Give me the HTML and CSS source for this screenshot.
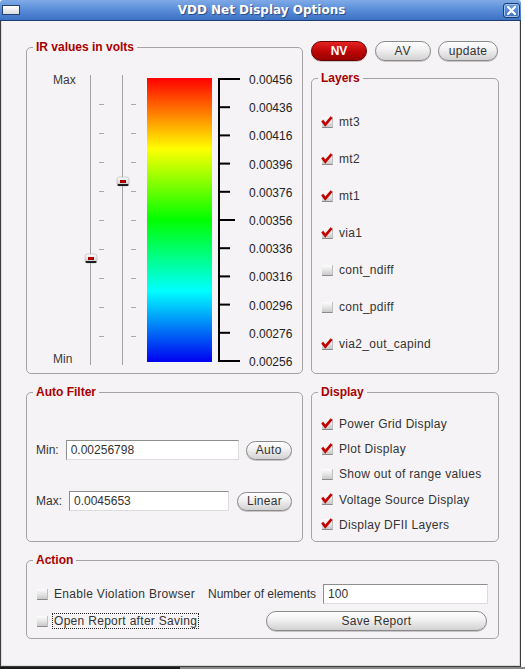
FILE: index.html
```html
<!DOCTYPE html>
<html>
<head>
<meta charset="utf-8">
<title>VDD Net Display Options</title>
<link rel="stylesheet" href="styles.css">
</head>
<body>
<div class="window">
  <div class="titlebar">
    <span class="win-icon"></span>
    <span class="win-title">VDD Net Display Options</span>
    <span class="win-close"><svg width="9" height="9" viewBox="0 0 9 9"><path d="M1 1L8 8M8 1L1 8" stroke="#fff" stroke-width="2.2" stroke-linecap="round"/></svg></span>
  </div>
  <div class="frame">
    <div class="grid">
      <div class="group ir">
        <div class="gtitle">IR values in volts</div>
        <div class="ir-body">
          <div class="mm"><span>Max</span><span>Min</span></div>
          <svg class="sliders" width="63" height="290" viewBox="0 0 63 290">
            <defs>
              <linearGradient id="hg" x1="0" y1="0" x2="0" y2="1">
                <stop offset="0" stop-color="#ffffff"/>
                <stop offset="1" stop-color="#c4c4c4"/>
              </linearGradient>
            </defs>
            <rect x="6" y="0" width="1" height="290" fill="#a2a2a2"/>
            <rect x="38" y="0" width="1" height="290" fill="#a2a2a2"/>
            <g fill="#a8a8a8">
              <rect x="15" y="29" width="5" height="1"/><rect x="47" y="29" width="5" height="1"/>
              <rect x="15" y="58" width="5" height="1"/><rect x="47" y="58" width="5" height="1"/>
              <rect x="15" y="87" width="5" height="1"/><rect x="47" y="87" width="5" height="1"/>
              <rect x="15" y="116" width="5" height="1"/><rect x="47" y="116" width="5" height="1"/>
              <rect x="15" y="145" width="5" height="1"/><rect x="47" y="145" width="5" height="1"/>
              <rect x="15" y="174" width="5" height="1"/><rect x="47" y="174" width="5" height="1"/>
              <rect x="15" y="203" width="5" height="1"/><rect x="47" y="203" width="5" height="1"/>
              <rect x="15" y="232" width="5" height="1"/><rect x="47" y="232" width="5" height="1"/>
              <rect x="15" y="261" width="5" height="1"/><rect x="47" y="261" width="5" height="1"/>
            </g>
            <g>
              <rect x="1" y="179" width="12" height="9" rx="2.5" fill="url(#hg)" stroke="#b4b4b4" stroke-width="0.6"/>
              <rect x="1.5" y="186" width="11" height="2" rx="1" fill="#1c1c1c"/>
              <rect x="4" y="182" width="6" height="3" fill="#a80000"/>
            </g>
            <g>
              <rect x="33" y="102" width="12" height="9" rx="2.5" fill="url(#hg)" stroke="#b4b4b4" stroke-width="0.6"/>
              <rect x="33.5" y="109" width="11" height="2" rx="1" fill="#1c1c1c"/>
              <rect x="36" y="105" width="6" height="3" fill="#a80000"/>
            </g>
          </svg>
          <div class="colorbar"></div>
          <svg class="scale" width="30" height="290" viewBox="0 0 30 290">
            <g fill="#000">
              <rect x="1" y="3" width="2" height="284"/>
              <rect x="1" y="3" width="22" height="2"/>
              <rect x="1" y="31.2" width="12" height="2"/>
              <rect x="1" y="59.4" width="12" height="2"/>
              <rect x="1" y="87.6" width="12" height="2"/>
              <rect x="1" y="115.8" width="12" height="2"/>
              <rect x="1" y="144" width="17" height="2"/>
              <rect x="1" y="172.2" width="12" height="2"/>
              <rect x="1" y="200.4" width="12" height="2"/>
              <rect x="1" y="228.6" width="12" height="2"/>
              <rect x="1" y="256.8" width="12" height="2"/>
              <rect x="1" y="285" width="22" height="2"/>
            </g>
          </svg>
          <div class="scale-labels">
            <span>0.00456</span><span>0.00436</span><span>0.00416</span><span>0.00396</span><span>0.00376</span><span>0.00356</span><span>0.00336</span><span>0.00316</span><span>0.00296</span><span>0.00276</span><span>0.00256</span>
          </div>
        </div>
      </div>

      <div class="rightcol">
        <div class="btnrow">
          <button class="btn btn-nv">NV</button>
          <button class="btn btn-av">AV</button>
          <button class="btn btn-upd">update</button>
        </div>
        <div class="group layers">
          <div class="gtitle">Layers</div>
          <div class="checklist layer-list">
            <div class="check"><span class="cb"><svg class="tick" width="12" height="11" viewBox="0 0 12 11"><path d="M1.2 4.6L4.3 8.6L10.6 1.2" fill="none" stroke="#c40000" stroke-width="2.6"/></svg></span><span class="ctext">mt3</span></div>
            <div class="check"><span class="cb"><svg class="tick" width="12" height="11" viewBox="0 0 12 11"><path d="M1.2 4.6L4.3 8.6L10.6 1.2" fill="none" stroke="#c40000" stroke-width="2.6"/></svg></span><span class="ctext">mt2</span></div>
            <div class="check"><span class="cb"><svg class="tick" width="12" height="11" viewBox="0 0 12 11"><path d="M1.2 4.6L4.3 8.6L10.6 1.2" fill="none" stroke="#c40000" stroke-width="2.6"/></svg></span><span class="ctext">mt1</span></div>
            <div class="check"><span class="cb"><svg class="tick" width="12" height="11" viewBox="0 0 12 11"><path d="M1.2 4.6L4.3 8.6L10.6 1.2" fill="none" stroke="#c40000" stroke-width="2.6"/></svg></span><span class="ctext">via1</span></div>
            <div class="check"><span class="cb"></span><span class="ctext">cont_ndiff</span></div>
            <div class="check"><span class="cb"></span><span class="ctext">cont_pdiff</span></div>
            <div class="check"><span class="cb"><svg class="tick" width="12" height="11" viewBox="0 0 12 11"><path d="M1.2 4.6L4.3 8.6L10.6 1.2" fill="none" stroke="#c40000" stroke-width="2.6"/></svg></span><span class="ctext">via2_out_capind</span></div>
          </div>
        </div>
      </div>

      <div class="group autofilter">
        <div class="gtitle">Auto Filter</div>
        <div class="filter-row first">
          <span class="field-label">Min:</span>
          <input class="input input-min" type="text" value="0.00256798">
          <button class="btn btn-auto">Auto</button>
        </div>
        <div class="filter-row second">
          <span class="field-label">Max:</span>
          <input class="input input-max" type="text" value="0.0045653">
          <button class="btn btn-linear">Linear</button>
        </div>
      </div>

      <div class="group display">
        <div class="gtitle">Display</div>
        <div class="checklist display-list">
          <div class="check"><span class="cb"><svg class="tick" width="12" height="11" viewBox="0 0 12 11"><path d="M1.2 4.6L4.3 8.6L10.6 1.2" fill="none" stroke="#c40000" stroke-width="2.6"/></svg></span><span class="ctext">Power Grid Display</span></div>
          <div class="check"><span class="cb"><svg class="tick" width="12" height="11" viewBox="0 0 12 11"><path d="M1.2 4.6L4.3 8.6L10.6 1.2" fill="none" stroke="#c40000" stroke-width="2.6"/></svg></span><span class="ctext">Plot Display</span></div>
          <div class="check"><span class="cb"></span><span class="ctext">Show out of range values</span></div>
          <div class="check"><span class="cb"><svg class="tick" width="12" height="11" viewBox="0 0 12 11"><path d="M1.2 4.6L4.3 8.6L10.6 1.2" fill="none" stroke="#c40000" stroke-width="2.6"/></svg></span><span class="ctext">Voltage Source Display</span></div>
          <div class="check"><span class="cb"><svg class="tick" width="12" height="11" viewBox="0 0 12 11"><path d="M1.2 4.6L4.3 8.6L10.6 1.2" fill="none" stroke="#c40000" stroke-width="2.6"/></svg></span><span class="ctext">Display DFII Layers</span></div>
        </div>
      </div>

      <div class="group action">
        <div class="gtitle">Action</div>
        <div class="action-row first">
          <div class="check cell-1"><span class="cb"></span><span class="ctext">Enable Violation Browser</span></div>
          <span class="field-label">Number of elements</span>
          <input class="input input-num" type="text" value="100">
        </div>
        <div class="action-row second">
          <div class="check cell-2"><span class="cb"></span><span class="ctext focus">Open Report after Saving</span></div>
          <button class="btn btn-save">Save Report</button>
        </div>
      </div>
    </div>
  </div>
</div>
<div class="taskstrip"></div>
</body>
</html>
```

FILE: styles.css
```css
* {
  box-sizing: border-box;
}

body {
  margin: 0;
  background: #ffffff;
  font-family: "Liberation Sans", Arial, sans-serif;
  font-size: 12px;
  color: #333333;
}

.window {
  width: 521px;
}

.titlebar {
  height: 21px;
  border-bottom: 1px solid #1f3d70;
  border-radius: 3px 3px 0 0;
  background: linear-gradient(#80aae6, #5b8fda 45%, #3d71c3);
  display: flex;
  align-items: center;
  padding: 0 1px 0 2px;
}

.win-icon {
  width: 18px;
  height: 10px;
  border: 1px solid #24426c;
  background: linear-gradient(#ffffff, #d9dbe0);
  margin-top: -1px;
}

.win-title {
  flex: 1;
  text-align: center;
  color: #ffffff;
  font-family: "DejaVu Sans", sans-serif;
  font-weight: bold;
  font-size: 12px;
  text-shadow: 1px 1px 0 #2b4f86;
}

.win-close {
  width: 17px;
  height: 15px;
  margin-top: 1px;
  border: 1px solid #1d3b6b;
  border-radius: 3px;
  background: linear-gradient(#6f9fe2, #3e71c1);
  box-shadow: inset 0 0 0 1px #9ebeee;
  display: flex;
  align-items: center;
  justify-content: center;
}

.win-close svg {
  display: block;
}

.frame {
  height: 646px;
  border: 1px solid #3c3c3c;
  border-top: none;
  background: #f6f3f6;
  padding: 20px 0 0 25px;
  box-shadow: inset 1px 0 #dedade, inset -1px -1px #dcd8dc;
}

.grid {
  display: grid;
  grid-template-columns: 277px 188px;
  grid-template-rows: 333px 150px 79px;
  column-gap: 8px;
  row-gap: 18px;
}

.group {
  border: 1px solid #a6a2a6;
  border-radius: 5px;
}

.gtitle {
  width: fit-content;
  margin: -8px 0 0 6px;
  padding: 0 3px;
  background: #f6f3f6;
  color: #a80000;
  font-weight: bold;
  line-height: 14px;
}

/* IR values */
.ir {
  margin-top: 6px;
  height: 327px;
}

.ir-body {
  display: flex;
  align-items: flex-start;
  margin-top: 19px;
  padding-left: 26px;
}

.mm {
  width: 31px;
  height: 293px;
  display: flex;
  flex-direction: column;
  justify-content: space-between;
  line-height: 14px;
  color: #3a3a3a;
}

.sliders {
  display: block;
  margin-top: 2px;
}

.colorbar {
  width: 65px;
  height: 284px;
  margin-top: 5px;
  background: linear-gradient(#ff0000, #ffff00 25%, #00ff00 50%, #00ffff 75%, #0000f0);
}

.scale {
  display: block;
  margin: 2px 0 0 5px;
}

.scale-labels {
  margin-left: 2px;
  height: 296px;
  display: flex;
  flex-direction: column;
  justify-content: space-between;
  line-height: 14px;
  color: #222222;
}

/* Right column */
.rightcol {
  display: flex;
  flex-direction: column;
}

.btnrow {
  display: flex;
  height: 20px;
}

.btn {
  height: 20px;
  padding: 0;
  font-family: "Liberation Sans", Arial, sans-serif;
  font-size: 12px;
  color: #333333;
  background: linear-gradient(#fefefe, #f2f2f2 40%, #d2d2d2);
  border: 1px solid #8a8a8a;
  border-radius: 10px;
  box-shadow: 0 1px 0 #c8c4c8;
  letter-spacing: 0.3px;
}

.btn-nv {
  width: 56px;
  color: #ffffff;
  font-weight: bold;
  background: linear-gradient(#e32424, #bf0606 50%, #980000);
  border-color: #6a0000;
  letter-spacing: 0;
}

.btn-av {
  width: 56px;
  margin-left: 8px;
  letter-spacing: 1px;
}

.btn-upd {
  width: 60px;
  margin-left: 7px;
}

.layers {
  margin-top: 17px;
  height: 296px;
}

.checklist {
  display: flex;
  flex-direction: column;
  padding-left: 10px;
}

.layer-list {
  margin-top: 30px;
  gap: 23px;
}

.display-list {
  margin-top: 18px;
  gap: 11.2px;
}

.check {
  display: flex;
  align-items: center;
  gap: 6px;
  line-height: 14px;
}

.ctext {
  letter-spacing: 0.3px;
}

.cb {
  position: relative;
  width: 11px;
  height: 11px;
  flex: none;
  background: linear-gradient(#fdfdfd, #e6e6e6 50%, #c9c9c9);
  border-bottom: 1px solid #8a8a8a;
  border-right: 1px solid #c0c0c0;
}

.tick {
  position: absolute;
  left: -1px;
  top: -1px;
  display: block;
}

/* Auto Filter */
.filter-row {
  display: flex;
  align-items: center;
  padding-left: 9px;
}

.filter-row.first {
  margin-top: 41px;
}

.filter-row.second {
  margin-top: 31px;
}

.field-label {
  margin-right: 7px;
}

.input {
  height: 20px;
  padding: 0 4px;
  border: 1px solid;
  border-color: #8e8e8e #dcdcdc #dcdcdc #8e8e8e;
  background: #ffffff;
  font-family: "Liberation Sans", Arial, sans-serif;
  font-size: 12px;
  color: #333333;
  outline: none;
}

.input-min {
  width: 173px;
}

.input-max {
  width: 160px;
}

.btn-auto {
  width: 46px;
  height: 19px;
  margin-left: 7px;
}

.btn-linear {
  width: 55px;
  height: 19px;
  margin-left: 8px;
}

/* Action */
.action {
  grid-column: 1 / -1;
}

.action-row {
  display: flex;
  align-items: center;
  padding-left: 10px;
}

.action-row.first {
  margin-top: 17px;
}

.action-row.second {
  margin-top: 7px;
}

.cell-1 {
  width: 171px;
}

.cell-2 {
  width: 229px;
  gap: 4px;
}

.focus {
  border: 1px dotted #222222;
  padding: 0 1px;
}

.input-num {
  width: 165px;
}

.btn-save {
  width: 221px;
}

.taskstrip {
  height: 2px;
  width: 525px;
  background: linear-gradient(to right, #1a1a1a 0 180px, #8a8a8a 180px);
}
```
